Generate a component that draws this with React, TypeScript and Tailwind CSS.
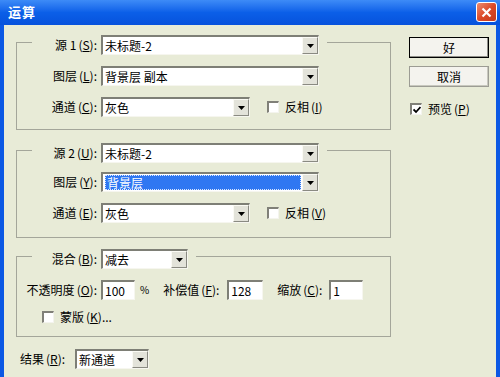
import React from "react";

const font = { fontFamily: '"Noto Sans CJK SC", "Liberation Sans", sans-serif' };

function Arrow() {
  return (
    <svg width="7" height="4" viewBox="0 0 7 4">
      <path d="M0 0 H7 L3.5 4 Z" fill="#000" />
    </svg>
  );
}

function Key({ k }: { k: string }) {
  return (
    <span className="ml-[2px]">
      (<span className="underline">{k}</span>)
    </span>
  );
}

function Combo({
  width,
  value,
  selected = false,
}: {
  width: string;
  value: string;
  selected?: boolean;
}) {
  return (
    <div
      className={`${width} h-[20px] flex bg-white border-t-2 border-l-2 border-b border-r border-t-[#7e7f76] border-l-[#7e7f76] border-b-[#f6f6ef] border-r-[#f6f6ef]`}
    >
      <div className="flex-1 flex items-center pl-[2px] pr-[1px] overflow-hidden">
        {selected ? (
          <div className="w-full h-[15px] bg-[#2f77f2] border border-dotted border-[#d9e6ff] text-white flex items-center pl-[1px] text-[12px] leading-none">
            {value}
          </div>
        ) : (
          <span className="text-[12px] leading-none text-black">{value}</span>
        )}
      </div>
      <div className="w-[16px] h-full bg-[#e3e3da] flex items-center justify-center border-t border-l border-t-[#fafaf4] border-l-[#fafaf4] border-b border-r border-b-[#8a8a82] border-r-[#8a8a82]">
        <Arrow />
      </div>
    </div>
  );
}

function TextBox({ width, value }: { width: string; value: string }) {
  return (
    <div
      className={`${width} h-[20px] bg-white flex items-center pl-[2px] text-[12px] leading-none border-t-2 border-l-2 border-b border-r border-t-[#7e7f76] border-l-[#7e7f76] border-b-[#f6f6ef] border-r-[#f6f6ef]`}
    >
      {value}
    </div>
  );
}

function Check({ checked = false }: { checked?: boolean }) {
  return (
    <div className="w-[12px] h-[12px] bg-white border-t-2 border-l-2 border-b border-r border-t-[#808078] border-l-[#808078] border-b-[#f4f4ee] border-r-[#f4f4ee] flex items-center justify-center">
      {checked && (
        <svg width="8" height="8" viewBox="0 0 8 8">
          <path d="M0.5 3.5 L3 6 L7.5 1" stroke="#000" strokeWidth="1.8" fill="none" />
        </svg>
      )}
    </div>
  );
}

function Label({ children }: { children: React.ReactNode }) {
  return (
    <div className="w-[81px] text-right text-[12px] leading-none text-black whitespace-nowrap pr-[1px]">
      {children}
    </div>
  );
}

function Group({
  legend,
  children,
  className,
}: {
  legend: React.ReactNode;
  children: React.ReactNode;
  className: string;
}) {
  return (
    <fieldset className={`border border-[#a4a69a] px-0 m-0 min-w-0 ${className}`}>
      <legend className="ml-[15px] pt-[6px] pr-[8px] pl-0">{legend}</legend>
      {children}
    </fieldset>
  );
}

function LegendRow({ label, children }: { label: React.ReactNode; children: React.ReactNode }) {
  return (
    <div className="flex items-center gap-[3px]">
      <div className="w-[66px] text-right text-[12px] leading-none text-black whitespace-nowrap pr-[1px]">
        {label}
      </div>
      {children}
    </div>
  );
}

function Row({
  label,
  children,
  className = "",
}: {
  label: React.ReactNode;
  children: React.ReactNode;
  className?: string;
}) {
  return (
    <div className={`flex items-center gap-[3px] ${className}`}>
      <Label>{label}</Label>
      {children}
    </div>
  );
}

export default function App() {
  return (
    <div className="w-[500px] h-[377px] overflow-hidden bg-[#0b58e4] flex flex-col" style={font}>
      <div className="h-[25px] flex items-start justify-between pl-[8px] pr-[3px] bg-gradient-to-b from-[#3d8bf7] via-[#0b5fe8] to-[#0752dc]">
        <span className="text-white font-bold text-[13px] leading-[24px] tracking-[1px]">运算</span>
        <div className="mt-[2px] w-[21px] h-[20px] rounded-[3px] border border-white bg-gradient-to-br from-[#ec8a6e] via-[#dc4a28] to-[#c53a1c] flex items-center justify-center">
          <svg width="11" height="11" viewBox="0 0 11 11">
            <path d="M1.5 1.5 L9.5 9.5 M9.5 1.5 L1.5 9.5" stroke="#fff" strokeWidth="2.2" />
          </svg>
        </div>
      </div>

      <div className="flex-1 mx-[4px] bg-[#e8ebd7] flex pl-[12px] pt-[4px]">
        <div className="w-[375px] flex flex-col">
          <Group
            className="pb-[12px]"
            legend={
              <LegendRow
                label={
                  <>
                    源 1<Key k="S" />:
                  </>
                }
              >
                <Combo width="w-[218px]" value="未标题-2" />
              </LegendRow>
            }
          >
            <Row
              className="mt-[11px]"
              label={
                <>
                  图层<Key k="L" />:
                </>
              }
            >
              <Combo width="w-[218px]" value="背景层 副本" />
            </Row>
            <Row
              className="mt-[11px]"
              label={
                <>
                  通道<Key k="C" />:
                </>
              }
            >
              <Combo width="w-[149px]" value="灰色" />
              <div className="ml-[14px] flex items-center gap-[6px] text-[12px] leading-none">
                <Check />
                <span>
                  反相<Key k="I" />
                </span>
              </div>
            </Row>
          </Group>

          <Group
            className="mt-[7px] pb-[14px]"
            legend={
              <LegendRow
                label={
                  <>
                    源 2<Key k="U" />:
                  </>
                }
              >
                <Combo width="w-[218px]" value="未标题-2" />
              </LegendRow>
            }
          >
            <Row
              className="mt-[9px]"
              label={
                <>
                  图层<Key k="Y" />:
                </>
              }
            >
              <Combo width="w-[218px]" value="背景层" selected />
            </Row>
            <Row
              className="mt-[11px]"
              label={
                <>
                  通道<Key k="E" />:
                </>
              }
            >
              <Combo width="w-[149px]" value="灰色" />
              <div className="ml-[14px] flex items-center gap-[6px] text-[12px] leading-none">
                <Check />
                <span>
                  反相<Key k="V" />
                </span>
              </div>
            </Row>
          </Group>

          <Group
            className="mt-[5px] pb-[13px]"
            legend={
              <LegendRow
                label={
                  <>
                    混合<Key k="B" />:
                  </>
                }
              >
                <Combo width="w-[87px]" value="减去" />
              </LegendRow>
            }
          >
            <div className="mt-[11px] flex items-center text-[12px] leading-none whitespace-nowrap">
              <Row
                label={
                  <>
                    不透明度<Key k="O" />:
                  </>
                }
              >
                <TextBox width="w-[34px]" value="100" />
              </Row>
              <span className="ml-[5px] text-[10px]">%</span>
              <span className="ml-[14px] w-[64px]">
                补偿值<Key k="F" />:
              </span>
              <TextBox width="w-[36px]" value="128" />
              <span className="ml-[14px] w-[52px]">
                缩放<Key k="C" />:
              </span>
              <TextBox width="w-[34px]" value="1" />
            </div>
            <div className="mt-[11px] ml-[25px] flex items-center gap-[6px] text-[12px] leading-none">
              <Check />
              <span>
                蒙版<Key k="K" />...
              </span>
            </div>
          </Group>

          <div className="mt-[12px] flex items-center gap-[3px] text-[12px] leading-none">
            <span className="ml-[4px] w-[52px]">
              结果<Key k="R" />:
            </span>
            <Combo width="w-[74px]" value="新通道" />
          </div>
        </div>

        <div className="ml-[18px] pt-[8px] flex flex-col">
          <div className="w-[80px] h-[21px] border border-black bg-[#f4f3ee] flex items-center justify-center text-[12px] leading-none shadow-[inset_-1px_-1px_0_#8f8f88]">
            好
          </div>
          <div className="mt-[8px] w-[80px] h-[21px] border border-[#9c9c94] bg-[#f4f3ee] flex items-center justify-center text-[12px] leading-none shadow-[inset_-1px_-1px_0_#c8c8be]">
            取消
          </div>
          <div className="mt-[16px] ml-[1px] flex items-center gap-[6px] text-[12px] leading-none">
            <Check checked />
            <span>
              预览<Key k="P" />
            </span>
          </div>
        </div>
      </div>
    </div>
  );
}
